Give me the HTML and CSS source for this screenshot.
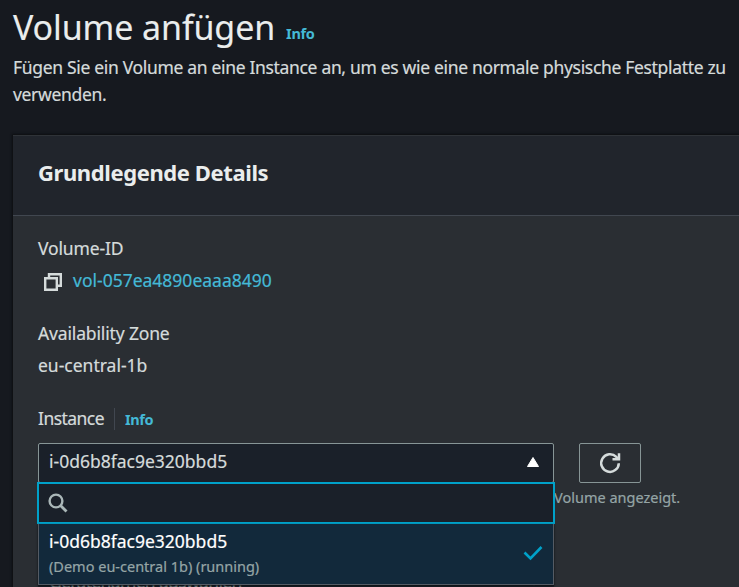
FILE: index.html
```html
<!DOCTYPE html>
<html lang="de">
<head>
<meta charset="utf-8">
<title>Volume anfügen</title>
<link rel="stylesheet" href="styles.css">
</head>
<body>
<header class="page-header">
  <div class="title-row"><h1><span>Volume anfügen</span></h1><a class="info"><span>Info</span></a></div>
  <p class="intro"><span>Fügen Sie ein Volume an eine Instance an, um es wie eine normale physische Festplatte zu</span> <span>verwenden.</span></p>
</header>
<section class="panel">
  <div class="panel-header"><h2><span>Grundlegende Details</span></h2></div>
  <div class="panel-body">
    <div class="field volume">
      <div class="label"><span>Volume-ID</span></div>
      <div class="value copyable">
        <svg class="copy" width="20" height="20" viewBox="0 0 20 20" fill="none" stroke="#d5dbdb" stroke-width="2.4"><path d="M6 6V2.200H17.800v11.600h-4"/><path d="M2.200 6.200h11.600v11.600H2.200z"/></svg>
        <a class="link"><span>vol-057ea4890eaaa8490</span></a>
      </div>
    </div>
    <div class="field zone">
      <div class="label"><span>Availability Zone</span></div>
      <div class="value"><span>eu-central-1b</span></div>
    </div>
    <div class="field instance">
      <div class="label label-row"><span class="instance-label">Instance</span><a class="info divided"><span>Info</span></a></div>
      <div class="control-row">
        <div class="select">
          <span class="selected">i-0d6b8fac9e320bbd5</span>
          <svg class="caret" width="14" height="12" viewBox="0 0 14 12"><path d="M7 1.5 12.5 10.5h-11z" fill="#fff" stroke="#fff" stroke-linejoin="round"/></svg>
          <div class="menu">
            <div class="search">
              <svg width="20" height="20" viewBox="0 0 20 20" fill="none" stroke="#aab7b8" stroke-width="2.4"><circle cx="8" cy="8" r="6.4"/><path d="m12.5 12.5 6 6" stroke-width="2.8"/></svg>
            </div>
            <div class="option">
              <div class="option-text">
                <div class="option-name"><span>i-0d6b8fac9e320bbd5</span></div>
                <div class="option-note"><span>(Demo eu-central 1b) (running)</span></div>
              </div>
              <svg class="check" width="20" height="16" viewBox="0 0 20 16"><path d="m1.5 7.5 6 6L18.500 2" fill="none" stroke="#00a1c9" stroke-width="2.6"/></svg>
            </div>
          </div>
        </div>
        <button class="refresh" aria-label="Aktualisieren"><svg width="24" height="24" viewBox="0 0 24 24" fill="none" stroke="#d5dbdb" stroke-width="2.5"><path d="M20.800 12.200a8.800 8.800 0 1 1-2.500-6.300l1.500 1.600"/><path d="M21 2.200v6h-6.500"/></svg></button>
      </div>
      <div class="hint"><span>Volume angezeigt.</span></div>
    </div>
    <div class="device"><span>Gerätenamen auswählen</span><svg class="caret" width="14" height="12" viewBox="0 0 14 12"><path d="M7 10.500 12.500 1.500h-11z" fill="#d5dbdb"/></svg></div>
  </div>
</section>
</body>
</html>
```
FILE: styles.css
```css
* { box-sizing: border-box; }
body {
  margin: 0;
  width: 739px;
  height: 587px;
  overflow: hidden;
  background: #16191f;
  color: #d5dbdb;
  font: 17.5px/27px "Noto Sans", sans-serif;
  white-space: nowrap;
  -webkit-text-stroke: 0.2px;
}
h1, h2, p { margin: 0; }
.page-header { height: 135px; padding: 4px 0 0 13px; }
.title-row { display: flex; align-items: baseline; }
h1 { font-size: 34px; line-height: 46px; font-weight: 400; color: #eaeded; letter-spacing: -0.12px; -webkit-text-stroke: 0.1px; }
.info { color: #44b9d6; font-size: 14.5px; font-weight: 700; letter-spacing: -0.35px; -webkit-text-stroke: 0; }
.title-row .info { margin-left: 11px; position: relative; top: -1px; }
.intro { padding-top: 4px; white-space: normal; width: 726px; letter-spacing: -0.325px; }
.panel {
  margin-left: 13px;
  border-top: 1px solid #2f3338;
  background: #2a2e33;
  box-shadow: 0 0 2px 1px #0c0e11;
  height: 452px;
}
.panel-header { height: 80px; padding: 22px 25px; background: #21252c; border-bottom: 1px solid #414750; }
h2 { font-size: 22px; line-height: 28px; font-weight: 700; color: #eaeded; letter-spacing: -0.4px; -webkit-text-stroke: 0; }
.panel-body { padding: 19px 25px 0; }
.field.volume, .field.zone { height: 85px; }
.label { letter-spacing: -0.15px; }
.value { margin-top: 5px; }
.copyable { display: flex; align-items: center; }
.copy { margin: 2px 10px 0 5px; }
.link { color: #44b9d6; }
.label-row { display: flex; align-items: center; }
.instance-label { letter-spacing: -0.55px; }
.divided { margin-left: 10px; padding-left: 10px; border-left: 1px solid #414750; line-height: 22px; }
.control-row { display: flex; gap: 25px; margin-top: 11px; }
.select {
  position: relative;
  display: flex;
  justify-content: space-between;
  align-items: center;
  width: 516px;
  height: 40px;
  padding: 0 13px 2px 10px;
  border: 1px solid #879596;
  border-radius: 2px;
  background: #1a2029;
}
.selected { padding-bottom: 1px; }
.menu { position: absolute; top: 38px; left: -2px; width: 518px; }
.search {
  display: flex;
  align-items: center;
  height: 42px;
  padding-left: 9px;
  border: 2px solid #00a1c9;
  background: #1a2029;
}
.option {
  display: flex;
  justify-content: space-between;
  height: 61px;
  margin: 0 1px;
  padding: 4px 10px 0 10px;
  border: 1px solid #545b64;
  border-top: 0;
  background: #12293b;
  box-shadow: 0 1px 2px #0c0e11;
}
.option-name { color: #fff; line-height: 27px; }
.option-note { color: #95a5a6; font-size: 14.5px; line-height: 22px; }
.check { margin-top: 17px; }
.refresh {
  display: flex;
  align-items: center;
  justify-content: center;
  width: 62px;
  height: 40px;
  padding: 0;
  border: 1px solid #879596;
  border-radius: 2px;
  background: none;
}
.hint { margin: 3px 0 0 516px; color: #95a5a6; font-size: 14.5px; line-height: 22px; }
.device {
  display: flex;
  justify-content: space-between;
  align-items: center;
  width: 516px;
  height: 40px;
  margin-top: 53px;
  padding: 0 13px 0 11px;
  background: #1a2029;
  color: #95a5a6;
  letter-spacing: -0.65px;
}
```
